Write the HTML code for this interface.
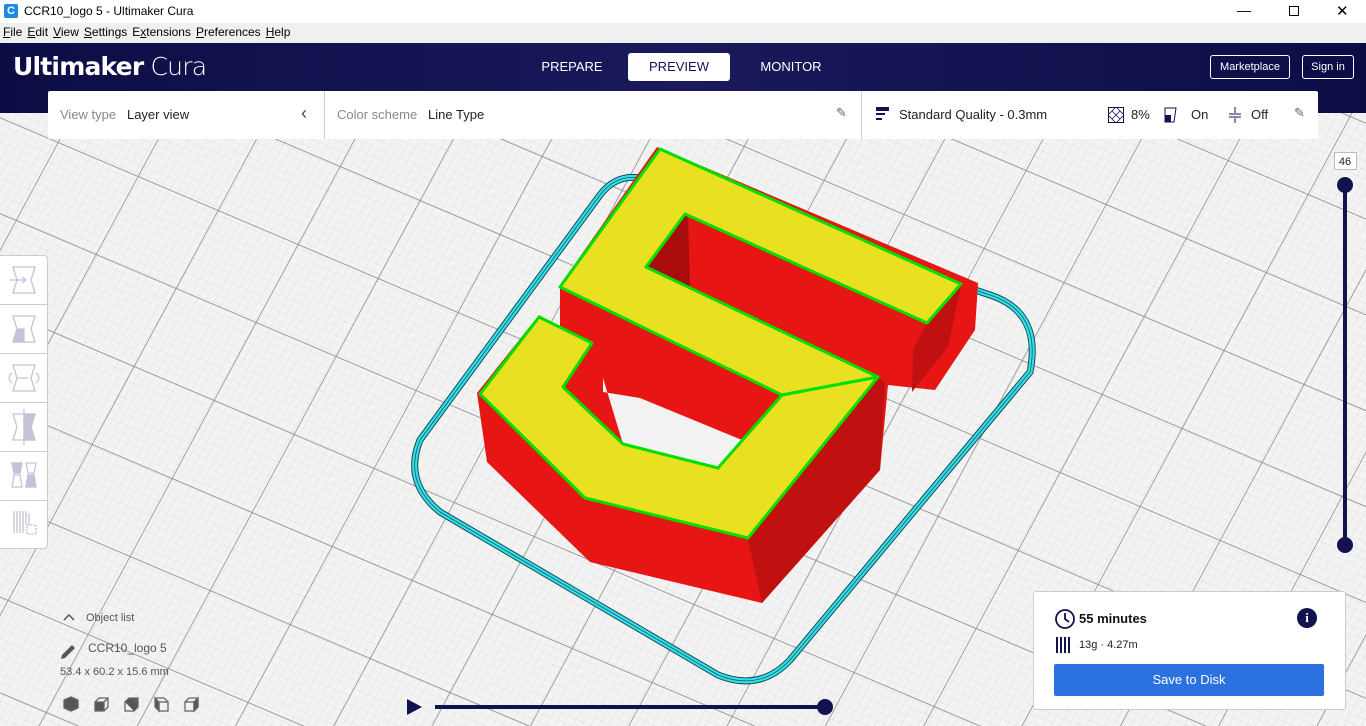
<!DOCTYPE html>
<html><head><meta charset="utf-8"><style>
*{margin:0;padding:0;box-sizing:border-box}
body{width:1366px;height:726px;overflow:hidden;position:relative;font-family:"Liberation Sans",sans-serif;background:#f3f3f3}
.abs{position:absolute}
#title{left:0;top:0;width:1366px;height:23px;background:#fff;font-size:12px;color:#000}
#menu{left:0;top:23px;width:1366px;height:20px;background:#f0f0f0;font-size:12px;color:#000}
#menu span{margin-right:5px}
#nav{left:0;top:43px;width:1366px;height:70px;background:linear-gradient(90deg,#0c0c45,#1a1a5c 50%,#0c0c45)}
.tab{top:10px;height:28px;line-height:28px;font-size:13px;color:#fff;text-align:center}
.btn{height:24px;line-height:22px;border:1px solid #fff;border-radius:3px;color:#fff;font-size:11px;text-align:center}
#bar{left:48px;top:91px;width:1270px;height:48px;background:#fff;border-radius:2px;font-size:13px;color:#222}
.lbl{color:#888}
#tools{left:0;top:255px;width:48px;height:294px;background:#fff;border:1px solid #ccc;border-left:none;border-radius:0 4px 4px 0}
#tools div{height:49px;border-bottom:1px solid #ccc}
#card{left:1033px;top:591px;width:313px;height:119px;background:#fff;border:1px solid #ccc;border-radius:3px}
</style></head><body>
<svg class="abs" style="left:0;top:0" width="1366" height="726">
<defs>
<pattern id="minor" patternUnits="userSpaceOnUse" width="10" height="10" patternTransform="matrix(0.72,0.3,-0.4,0.72,0,0)">
<path d="M0 0H10M0 0V10" stroke="#dcdcdc" stroke-width="1" fill="none"/></pattern>
<pattern id="major" patternUnits="userSpaceOnUse" width="100" height="100" patternTransform="matrix(0.8,0.34,-0.42,0.78,20,30)">
<path d="M0 0H100M0 0V100" stroke="#808080" stroke-width="1.6" fill="none"/></pattern>
</defs>
<rect width="1366" height="726" fill="#f3f3f3"/>
<rect width="1366" height="726" fill="url(#minor)"/>
<rect width="1366" height="726" fill="url(#major)"/>
<!-- skirt -->
<path d="M640,178 L990,295 Q1042,312 1030,372 L790,660 Q760,692 718,675 L440,512 Q403,482 420,440 L600,195 Q616,174 640,178 Z" fill="none" stroke="#1a4a50" stroke-width="7"/>
<path d="M640,178 L990,295 Q1042,312 1030,372 L790,660 Q760,692 718,675 L440,512 Q403,482 420,440 L600,195 Q616,174 640,178 Z" fill="none" stroke="#30e0ea" stroke-width="5"/>
<path d="M640,178 L990,295 Q1042,312 1030,372 L790,660 Q760,692 718,675 L440,512 Q403,482 420,440 L600,195 Q616,174 640,178 Z" fill="none" stroke="#1a5a60" stroke-width="0.8"/>
<!-- red body -->
<polygon points="657,147 978,283 975,330 935,390 888,385 880,470 762,603 590,562 487,462 477,393 539,315 560,327 560,285" fill="#e81515"/>
<polygon points="927,323 961,286 948,347 912,392 913,350" fill="#c01010"/>
<polygon points="878,377 885,382 880,470 762,603 748,540" fill="#c01010"/>
<polygon points="685,214 646,267 690,290 688,215" fill="#a80c0c"/>
<!-- hole -->
<polygon points="603,378 623,444 718,468 742,440 640,398 603,392" fill="#f2f2f2"/>
<!-- tops -->
<polygon points="660,149 961,284 927,323 685,214 646,267 878,377 782,395 560,287" fill="#e8e020" stroke="#00e000" stroke-width="3" stroke-linejoin="round"/>
<polygon points="878,377 748,538 585,498 480,394 539,317 592,343 563,387 623,444 718,468 782,395" fill="#e8e020" stroke="#00e000" stroke-width="3" stroke-linejoin="round"/>
<!-- right slider -->
<line x1="1345" y1="185" x2="1345" y2="545" stroke="#12124f" stroke-width="4"/>
<circle cx="1345" cy="185" r="8" fill="#12124f"/><circle cx="1345" cy="545" r="8" fill="#12124f"/>
<rect x="1334.5" y="152.5" width="22" height="17" fill="#fff" stroke="#bbb"/>
<text x="1345" y="165" font-size="11" text-anchor="middle" font-family="Liberation Sans" fill="#222">46</text>
<!-- bottom slider -->
<polygon points="407,699 422,707 407,715" fill="#12124f"/>
<line x1="435" y1="707" x2="825" y2="707" stroke="#12124f" stroke-width="4"/>
<circle cx="825" cy="707" r="8" fill="#12124f"/>
<!-- view cubes -->
<g fill="none" stroke="#666" stroke-width="1.3">
<path d="M64,700 l7,-3 7,3 v8 l-7,3 -7,-3z" fill="#555"/>
<rect x="95" y="702" width="9" height="9" fill="#555"/><path d="M95,702 l4,-4 h9 v9 l-4,4 M104,702 l4,-4"/>
<rect x="125" y="702" width="9" height="9"/><path d="M125,702 l4,-4 h9 v9 l-4,4 M134,702 l4,-4" fill="#555"/>
<path d="M155,698 l4,4 v9 l-4,-4z" fill="#555"/><rect x="159" y="702" width="9" height="9"/><path d="M155,698 h9 l4,4"/>
<rect x="185" y="702" width="9" height="9"/><path d="M185,702 l4,-4 h9 v9 l-4,4 M194,702 l4,-4"/><path d="M198,698 v9 l-4,4 v-9z" fill="#555"/>
</g>
<path d="M64,620 l5,-5 5,5" stroke="#555" stroke-width="1.5" fill="none"/>
<path d="M62,655 l10,-10 3,3 -10,10 -4,1z" fill="#555"/>
</svg>

<div id="title" class="abs">
<div class="abs" style="left:4px;top:4px;width:14px;height:14px;background:#1e88e5;border-radius:2px;color:#fff;font-size:11px;font-weight:bold;text-align:center;line-height:14px">C</div>
<div class="abs" style="left:24px;top:4px">CCR10_logo 5 - Ultimaker Cura</div>
<div class="abs" style="left:1237px;top:2px;font-size:14px">—</div>
<div class="abs" style="left:1289px;top:6px;width:10px;height:10px;border:1px solid #000"></div>
<div class="abs" style="left:1336px;top:2px;font-size:15px">✕</div>
</div>
<div id="menu" class="abs"><div style="padding:2px 0 0 3px"><span><u>F</u>ile</span><span><u>E</u>dit</span><span><u>V</u>iew</span><span><u>S</u>ettings</span><span>E<u>x</u>tensions</span><span><u>P</u>references</span><span><u>H</u>elp</span></div></div>
<div id="nav" class="abs">
<div class="abs" style="left:13px;top:9px;color:#fff;font-size:25px;font-family:'DejaVu Sans',sans-serif;letter-spacing:-0.8px"><b style="font-weight:bold">Ultimaker</b> <span style="font-weight:200">Cura</span></div>
<div class="abs tab" style="left:530px;width:84px">PREPARE</div>
<div class="abs tab" style="left:628px;width:102px;background:#fff;color:#12124f;border-radius:3px">PREVIEW</div>
<div class="abs tab" style="left:745px;width:92px">MONITOR</div>
<div class="abs btn" style="left:1210px;top:12px;width:80px">Marketplace</div>
<div class="abs btn" style="left:1302px;top:12px;width:52px">Sign in</div>
</div>
<div id="bar" class="abs">
<div class="abs" style="left:12px;top:16px"><span class="lbl">View type</span>&nbsp;&nbsp;&nbsp;Layer view</div>
<div class="abs" style="left:253px;top:12px;font-size:18px;color:#444">‹</div>
<div class="abs" style="left:276px;top:0;width:1px;height:48px;background:#ccc"></div>
<div class="abs" style="left:289px;top:16px"><span class="lbl">Color scheme</span>&nbsp;&nbsp;&nbsp;Line Type</div>
<div class="abs" style="left:788px;top:14px;font-size:13px;color:#666">✎</div>
<div class="abs" style="left:813px;top:0;width:1px;height:48px;background:#ccc"></div>
<div class="abs" style="left:828px;top:16px;width:13px;height:4px;background:#12124f"></div>
<div class="abs" style="left:828px;top:22px;width:9px;height:2px;background:#12124f"></div>
<div class="abs" style="left:828px;top:27px;width:6px;height:2px;background:#12124f"></div>
<div class="abs" style="left:851px;top:16px">Standard Quality - 0.3mm</div>
<svg class="abs" style="left:1060px;top:16px" width="16" height="16"><rect x="0.5" y="0.5" width="15" height="15" fill="none" stroke="#12124f"/><path d="M0 8L8 0L16 8L8 16Z M4 4L12 12M12 4L4 12" stroke="#12124f" fill="none" stroke-width="0.8"/></svg>
<div class="abs" style="left:1083px;top:16px">8%</div>
<svg class="abs" style="left:1116px;top:16px" width="14" height="16"><path d="M1 1H12L10 15H1Z" fill="none" stroke="#12124f"/><path d="M1 8H7V15H1Z" fill="#12124f"/></svg>
<div class="abs" style="left:1143px;top:16px">On</div>
<svg class="abs" style="left:1180px;top:15px" width="14" height="18"><path d="M1 8H13M1 11H13M7 1V7M7 12V17" stroke="#12124f" fill="none"/></svg>
<div class="abs" style="left:1203px;top:16px">Off</div>
<div class="abs" style="left:1246px;top:14px;color:#666">✎</div>
</div>
<div id="tools" class="abs"><div></div><div></div><div></div><div></div><div></div><div style="border:none"></div></div>
<svg class="abs" style="left:0;top:255px" width="48" height="294" fill="none" stroke="#c4c4d8" stroke-width="1.3">
<path d="M13 12H35L31 25L35 38H13L17 25Z"/><path d="M10 25H26M22 22L26 25L22 28" />
<path d="M13 61H35L31 74L35 87H13L17 74Z"/><path d="M13 87L17 74H24V87Z" fill="#c4c4d8"/>
<path d="M13 110H35L31 123L35 136H13L17 123Z"/><path d="M12 118Q6 123 12 128M36 118Q42 123 36 128M17 123H28"/>
<path d="M13 159H35L31 172L35 185H13L17 172Z"/><path d="M24 159H35L31 172L35 185H24Z" fill="#c4c4d8"/><path d="M24 154V190"/>
<path d="M12 208H22L20 218H14Z M26 208H36L34 218H28Z M14 220H20L22 232H12Z M28 220H34L36 232H26Z"/><path d="M12 208H22L20 218H14Z M28 220H34L36 232H26Z" fill="#c4c4d8"/>
<path d="M14 256V278M17 256V278M20 256V278M23 256V278M26 256V270M29 258V270"/><rect x="27" y="270" width="9" height="9" stroke-dasharray="2 1"/>
</svg>
<div class="abs" style="left:86px;top:612px;font-size:11px;color:#555">Object list</div>
<div class="abs" style="left:88px;top:641px;font-size:12px;color:#555">CCR10_logo 5</div>
<div class="abs" style="left:60px;top:666px;font-size:11px;color:#555">53.4 x 60.2 x 15.6 mm</div>
<div id="card" class="abs">
<svg class="abs" style="left:20px;top:16px" width="22" height="22"><circle cx="11" cy="11" r="9" fill="none" stroke="#12124f" stroke-width="1.8"/><path d="M11 5v6l4 3" stroke="#12124f" stroke-width="1.8" fill="none"/></svg>
<div class="abs" style="left:45px;top:19px;font-size:13px;font-weight:bold;color:#111">55 minutes</div>
<div class="abs" style="left:263px;top:16px;width:20px;height:20px;border-radius:50%;background:#12124f;color:#fff;font-size:13px;font-weight:bold;text-align:center;line-height:20px;font-family:'Liberation Serif',serif">i</div>
<div class="abs" style="left:22px;top:45px;width:14px;height:16px;background:repeating-linear-gradient(90deg,#12124f 0 2px,#fff 2px 4px)"></div>
<div class="abs" style="left:45px;top:47px;font-size:11px;color:#222">13g · 4.27m</div>
<div class="abs" style="left:20px;top:72px;width:270px;height:32px;background:#2b72e0;border-radius:2px;color:#fff;font-size:13px;text-align:center;line-height:32px">Save to Disk</div>
</div>
</body></html>
